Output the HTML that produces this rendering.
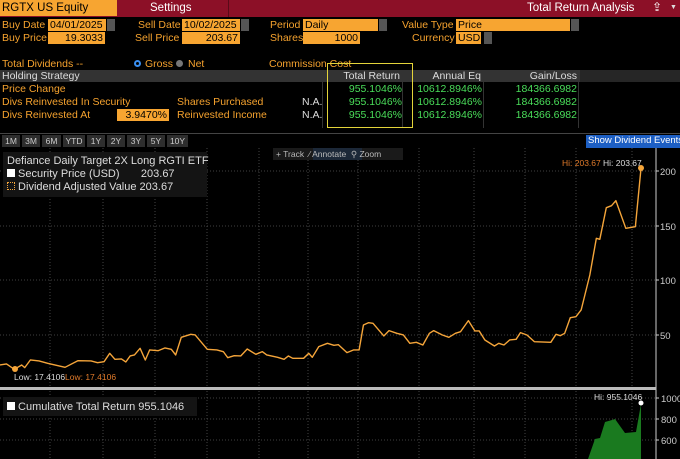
<!DOCTYPE html>
<html><head><meta charset="utf-8"><style>
*{margin:0;padding:0;box-sizing:border-box}
body{width:680px;height:459px;background:#000;position:relative;overflow:hidden;font-family:"Liberation Sans",sans-serif;font-size:10.5px;color:#f5a22e}
.a{position:absolute;white-space:nowrap;line-height:12px}
.in{position:absolute;background:#f7a531;color:#000;height:12px;line-height:12px;padding:0 2px;font-size:10.5px}
.r{text-align:right}
.dd{position:absolute;background:#555;width:8px;height:12px}
.g{color:#4ade5a}
.w{color:#ddd}
.btn{position:absolute;top:135px;height:12px;background:#2e2e2e;color:#ccc;font-size:8.5px;line-height:12px;text-align:center}
</style></head><body>
<!-- top bar -->
<div style="position:absolute;left:0;top:0;width:680px;height:17px;background:#8c1027"></div>
<div style="position:absolute;left:0;top:0;width:117px;height:16px;background:#f7a531;color:#000;font-size:11.5px;line-height:16px;padding-left:2px">RGTX US Equity</div>
<div class="a" style="left:150px;top:2px;color:#fff;font-size:11.5px">Settings</div>
<div style="position:absolute;left:228px;top:0;width:1px;height:17px;background:#5a0a18"></div>
<div class="a" style="left:527px;top:2px;color:#fff;font-size:11.5px">Total Return Analysis</div>
<div class="a" style="left:652px;top:1px;color:#fff;font-size:12px">⇪</div>
<div class="a" style="left:670px;top:2px;color:#ddd;font-size:7px">▼</div>

<div class="a" style="left:2px;top:19px">Buy Date</div>
<div class="in" style="left:48px;top:19px;width:58px">04/01/2025</div>
<div class="dd" style="left:107px;top:19px"></div>
<div class="a" style="left:138px;top:19px">Sell Date</div>
<div class="in" style="left:182px;top:19px;width:58px">10/02/2025</div>
<div class="dd" style="left:241px;top:19px"></div>
<div class="a" style="left:270px;top:19px">Period</div>
<div class="in" style="left:303px;top:19px;width:75px">Daily</div>
<div class="dd" style="left:379px;top:19px"></div>
<div class="a" style="left:402px;top:19px">Value Type</div>
<div class="in" style="left:456px;top:19px;width:114px">Price</div>
<div class="dd" style="left:571px;top:19px"></div>

<div class="a" style="left:2px;top:32px">Buy Price</div>
<div class="in r" style="left:48px;top:32px;width:57px">19.3033</div>
<div class="a" style="left:135px;top:32px">Sell Price</div>
<div class="in r" style="left:182px;top:32px;width:58px">203.67</div>
<div class="a" style="left:270px;top:32px">Shares</div>
<div class="in r" style="left:303px;top:32px;width:57px">1000</div>
<div class="a" style="left:412px;top:32px">Currency</div>
<div class="in" style="left:456px;top:32px;width:25px">USD</div>
<div class="dd" style="left:484px;top:32px"></div>

<div class="a" style="left:2px;top:58px">Total Dividends --</div>
<div style="position:absolute;left:134px;top:60px;width:7px;height:7px;border-radius:50%;border:2px solid #3a8ff0"></div>
<div class="a" style="left:145px;top:58px">Gross</div>
<div style="position:absolute;left:176px;top:60px;width:7px;height:7px;border-radius:50%;background:#777"></div>
<div class="a" style="left:188px;top:58px">Net</div>
<div class="a" style="left:269px;top:58px">Commission Cost</div>

<div style="position:absolute;left:0;top:70px;width:680px;height:12px;background:#262626"></div>
<div style="position:absolute;left:0;top:70px;width:580px;height:12px;background:#333"></div>
<div class="a w" style="left:2px;top:70px">Holding Strategy</div>
<div class="a w r" style="left:300px;top:70px;width:100px">Total Return</div>
<div class="a w r" style="left:400px;top:70px;width:81px">Annual Eq</div>
<div class="a w r" style="left:480px;top:70px;width:97px">Gain/Loss</div>
<div style="position:absolute;left:402px;top:70px;width:1px;height:58px;background:#333"></div>
<div style="position:absolute;left:483px;top:70px;width:1px;height:58px;background:#333"></div>
<div style="position:absolute;left:578px;top:70px;width:1px;height:58px;background:#333"></div>
<div style="position:absolute;left:322px;top:70px;width:1px;height:58px;background:#333"></div>

<div class="a" style="left:2px;top:83px">Price Change</div>
<div class="a" style="left:2px;top:96px">Divs Reinvested In Security</div>
<div class="a" style="left:2px;top:109px">Divs Reinvested At</div>
<div class="in r" style="left:117px;top:109px;width:52px">3.9470%</div>
<div class="a" style="left:177px;top:96px">Shares Purchased</div>
<div class="a" style="left:177px;top:109px">Reinvested Income</div>
<div class="a w" style="left:302px;top:96px">N.A.</div>
<div class="a w" style="left:302px;top:109px">N.A.</div>
<div class="a g r" style="left:300px;top:83px;width:102px">955.1046%</div>
<div class="a g r" style="left:300px;top:96px;width:102px">955.1046%</div>
<div class="a g r" style="left:300px;top:109px;width:102px">955.1046%</div>
<div class="a g r" style="left:400px;top:83px;width:82px">10612.8946%</div>
<div class="a g r" style="left:400px;top:96px;width:82px">10612.8946%</div>
<div class="a g r" style="left:400px;top:109px;width:82px">10612.8946%</div>
<div class="a g r" style="left:480px;top:83px;width:97px">184366.6982</div>
<div class="a g r" style="left:480px;top:96px;width:97px">184366.6982</div>
<div class="a g r" style="left:480px;top:109px;width:97px">184366.6982</div>
<div style="position:absolute;left:327px;top:63px;width:86px;height:65px;border:1.5px solid #e4d43a"></div>

<div style="position:absolute;left:0;top:133px;width:680px;height:1px;background:#444"></div>
<div class="btn" style="left:2px;width:18px">1M</div>
<div class="btn" style="left:22px;width:18px">3M</div>
<div class="btn" style="left:42px;width:19px">6M</div>
<div class="btn" style="left:63px;width:22px">YTD</div>
<div class="btn" style="left:87px;width:18px">1Y</div>
<div class="btn" style="left:107px;width:18px">2Y</div>
<div class="btn" style="left:127px;width:18px">3Y</div>
<div class="btn" style="left:147px;width:18px">5Y</div>
<div class="btn" style="left:167px;width:21px">10Y</div>
<div class="a" style="left:586px;top:135px;width:94px;height:13px;background:#1d5fc4;color:#fff;font-size:9.5px;padding-left:2px">Show Dividend Events</div>

<svg style="position:absolute;left:0;top:0" width="680" height="459">
<g stroke="#555" stroke-dasharray="1,2" stroke-width="0.8">
<line x1="0" y1="171" x2="656" y2="171"/><line x1="0" y1="226" x2="656" y2="226"/><line x1="0" y1="280" x2="656" y2="280"/><line x1="0" y1="335" x2="656" y2="335"/>
<line x1="0" y1="398" x2="656" y2="398"/><line x1="0" y1="419" x2="656" y2="419"/><line x1="0" y1="440" x2="656" y2="440"/>
<line x1="50" y1="148" x2="50" y2="459"/><line x1="103" y1="148" x2="103" y2="459"/><line x1="155" y1="148" x2="155" y2="459"/><line x1="207" y1="148" x2="207" y2="459"/><line x1="259" y1="148" x2="259" y2="459"/><line x1="308" y1="148" x2="308" y2="459"/><line x1="358" y1="148" x2="358" y2="459"/><line x1="419" y1="148" x2="419" y2="459"/><line x1="474" y1="148" x2="474" y2="459"/><line x1="525" y1="148" x2="525" y2="459"/><line x1="576" y1="148" x2="576" y2="459"/><line x1="632" y1="148" x2="632" y2="459"/>
</g>
<line x1="656" y1="148" x2="656" y2="459" stroke="#ccc" stroke-width="1"/>
<rect x="0" y="387" width="656" height="3" fill="#bbb"/>
<g transform="translate(0,140) scale(0.4337,0.3333)">
<polyline fill="none" stroke="#f5a53a" stroke-width="1.4" vector-effect="non-scaling-stroke" stroke-linejoin="round" points="0,675 15,672 33,688 50,675 57,683 70,660 90,663 110,670 150,682 180,662 210,663 225,668 240,665 253,640 265,658 280,657 290,666 300,648 310,645 323,625 335,660 345,630 365,632 380,624 395,628 405,645 418,592 440,583 450,585 478,628 500,630 515,635 525,653 540,647 555,648 570,627 590,643 605,635 615,645 640,652 655,658 665,648 675,655 700,655 712,640 720,652 735,620 755,610 770,616 780,614 800,638 815,630 828,630 838,555 850,548 860,550 885,588 897,572 915,580 930,585 945,610 960,607 975,615 990,580 1000,572 1020,585 1035,592 1050,580 1062,575 1080,542 1095,573 1105,573 1118,600 1140,618 1150,610 1162,615 1175,600 1190,598 1200,578 1215,585 1232,605 1270,607 1282,583 1292,587 1302,580 1315,533 1328,530 1340,510 1360,405 1375,295 1383,298 1398,203 1410,197 1420,182 1443,265 1465,260 1478,85"/>
</g>
<circle cx="641" cy="168" r="3" fill="#f5a53a"/>
<circle cx="15" cy="369" r="3" fill="#f5a53a"/>
<polygon points="588,459 595,439 600,438 605,422 612,420 615,419 625,433 636,432 641,404 641,459" fill="#1a7a1f"/>
<circle cx="641" cy="403" r="2.5" fill="#fff"/>
<g fill="#ccc" font-family="Liberation Sans" font-size="9.5">
<text x="660" y="175">200</text><text x="660" y="230">150</text><text x="660" y="284">100</text><text x="660" y="339">50</text>
<text x="661" y="402">1000</text><text x="661" y="423">800</text><text x="661" y="444">600</text>
</g>
<g stroke="#ccc"><line x1="656" y1="171" x2="659" y2="171"/><line x1="656" y1="226" x2="659" y2="226"/><line x1="656" y1="280" x2="659" y2="280"/><line x1="656" y1="335" x2="659" y2="335"/><line x1="656" y1="398" x2="659" y2="398"/><line x1="656" y1="419" x2="659" y2="419"/><line x1="656" y1="440" x2="659" y2="440"/></g>
<g font-family="Liberation Sans" font-size="8.5">
<text x="562" y="166" fill="#e07a2a">Hi: 203.67</text><text x="603" y="166" fill="#ddd">Hi: 203.67</text>
<text x="14" y="380" fill="#ddd">Low: 17.4106</text><text x="65" y="380" fill="#e07a2a">Low: 17.4106</text>
<text x="594" y="400" fill="#ddd">Hi: 955.1046</text>
</g>
</svg>

<div style="position:absolute;left:273px;top:148px;width:130px;height:12px;background:#1a1a1a"></div>
<div style="position:absolute;left:313px;top:148px;width:49px;height:12px;background:#1c2838"></div>
<div class="a" style="left:276px;top:148px;color:#bbb;font-size:8.5px">+ Track &nbsp;⁄ Annotate &nbsp;⚲ Zoom</div>

<div style="position:absolute;left:3px;top:152px;width:204px;height:45px;background:#141414"></div>
<div class="a w" style="left:7px;top:155px;font-size:11px;line-height:13px">Defiance Daily Target 2X Long RGTI ETF</div>
<div class="a w" style="left:7px;top:168px;font-size:11px;line-height:13px"><span style="display:inline-block;width:8px;height:8px;background:#fff"></span> Security Price (USD) &nbsp;&nbsp;&nbsp;&nbsp;&nbsp;&nbsp;203.67</div>
<div class="a w" style="left:7px;top:181px;font-size:11px;line-height:13px"><span style="display:inline-block;width:8px;height:8px;border:1px dotted #f5a53a"></span> Dividend Adjusted Value 203.67</div>

<div style="position:absolute;left:3px;top:397px;width:194px;height:19px;background:#141414"></div>
<div class="a w" style="left:7px;top:401px;font-size:11px;line-height:13px"><span style="display:inline-block;width:8px;height:8px;background:#fff"></span> Cumulative Total Return 955.1046</div>
</body></html>
